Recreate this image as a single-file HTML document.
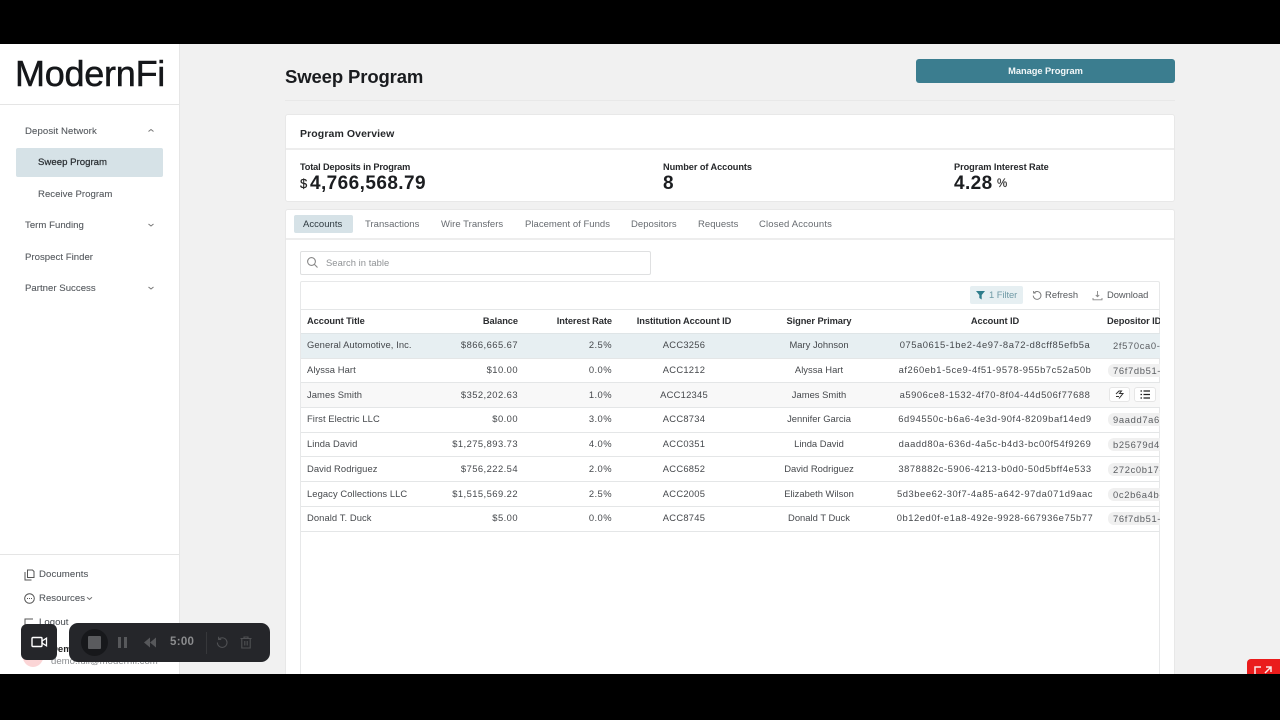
<!DOCTYPE html>
<html><head><meta charset="utf-8"><style>
html,body{margin:0;padding:0;width:1280px;height:720px;overflow:hidden;background:#000}
body{font-family:"Liberation Sans",sans-serif;position:relative;color:#1b1d20;filter:blur(.3px)}
div,span.a{position:absolute}
.t{position:absolute;white-space:nowrap;line-height:12px;height:12px}
.nav{font-size:9.6px;color:#55595e;letter-spacing:.02px;-webkit-text-stroke:.1px #55595e;margin-top:1px}
.tab{font-size:9.5px;color:#676b70;top:219px;letter-spacing:.03px}
.lbl{font-size:9.2px;font-weight:700;color:#26282b;top:161px;letter-spacing:-.06px}
.big{font-size:19px;font-weight:700;color:#1b1d20;top:174px;line-height:20px;height:20px;letter-spacing:.42px}
.th{font-size:9.3px;font-weight:700;color:#2b2d30;top:315px;letter-spacing:-.08px}
.c{font-size:9.4px;color:#45484c;letter-spacing:.25px}
.c.l{letter-spacing:.08px}
.c.r{letter-spacing:.45px}
.c.m[style*="left:709px"]{letter-spacing:.02px}
.c.m[style*="left:885px"]{letter-spacing:.55px}
.l{left:307px}.r{text-align:right;width:120px}.m{text-align:center;width:220px}
.hl{position:absolute;left:301px;width:859px;height:1px;background:#e4e6e7}
.chip{position:absolute;left:1108px;width:52px;height:13px;background:#f0f0f0;border-radius:6px 0 0 6px;overflow:hidden;font-size:9.4px;line-height:13px;color:#5a5d61;padding-left:5px;box-sizing:border-box;white-space:nowrap;letter-spacing:.65px}
</style></head><body>
<div style="left:0;top:44px;width:1280px;height:630px;background:#f1f1f1;overflow:hidden"></div>

<div style="left:0;top:44px;width:179px;height:630px;background:#fff;border-right:1px solid #e6e6e6"></div>
<div style="left:0;top:104px;width:179px;height:1px;background:#e5e5e5"></div>
<div style="left:0;top:554px;width:179px;height:1px;background:#e5e5e5"></div>
<div class="t" style="left:15px;top:54px;font-size:36px;line-height:40px;height:40px;color:#15171a;letter-spacing:-.25px;-webkit-text-stroke:.5px #15171a">ModernFi</div>

<div class="t nav" style="left:25px;top:125px;letter-spacing:.1px">Deposit Network</div>
<svg style="position:absolute;left:147px;top:128px" width="8" height="6"><path d="M1.5 3.5L4 1.5L6.5 3.5" fill="none" stroke="#777" stroke-width="1"/></svg>
<div style="left:16px;top:148px;width:147px;height:29px;background:#d6e2e7;border-radius:2px"></div>
<div class="t nav" style="left:38px;top:156px;color:#2c3135;-webkit-text-stroke:.25px #2c3135">Sweep Program</div>
<div class="t nav" style="left:38px;top:188px">Receive Program</div>
<div class="t nav" style="left:25px;top:219px">Term Funding</div>
<svg style="position:absolute;left:147px;top:222px" width="8" height="6"><path d="M1.5 2L4 4L6.5 2" fill="none" stroke="#777" stroke-width="1"/></svg>
<div class="t nav" style="left:25px;top:251px">Prospect Finder</div>
<div class="t nav" style="left:25px;top:282px">Partner Success</div>
<svg style="position:absolute;left:147px;top:285px" width="8" height="6"><path d="M1.5 2L4 4L6.5 2" fill="none" stroke="#777" stroke-width="1"/></svg>

<svg style="position:absolute;left:24px;top:569px" width="11" height="12"><path d="M3.5 1H8.5L10 2.5V8.5H3.5Z M1 3V11H7.5" fill="none" stroke="#555" stroke-width="1"/></svg>
<div class="t nav" style="left:39px;top:568px;letter-spacing:.1px">Documents</div>
<svg style="position:absolute;left:24px;top:593px" width="11" height="11"><circle cx="5.5" cy="5.5" r="4.8" fill="none" stroke="#555" stroke-width="1"/><path d="M3 5.5h1M5 5.5h1M7 5.5h1" stroke="#555"/></svg>
<div class="t nav" style="left:39px;top:592px">Resources</div>
<svg style="position:absolute;left:86px;top:596px" width="7" height="5"><path d="M1 1.2L3.5 3.4L6 1.2" fill="none" stroke="#777"/></svg>
<svg style="position:absolute;left:24px;top:618px" width="11" height="10"><path d="M9 1H1V9H9" fill="none" stroke="#555"/></svg>
<div class="t nav" style="left:39px;top:616px">Logout</div>
<div style="left:22px;top:641px;width:22px;height:26px;background:#fbd5d6;border-radius:50%"></div>
<div class="t" style="left:51px;top:644px;font-size:9.6px;font-weight:700;color:#222">Demo Full</div>
<div class="t" style="left:51px;top:656px;font-size:9.6px;color:#8a8d90;letter-spacing:0">demo.full@modernfi.com</div>

<div class="t" style="left:285px;top:66px;font-size:18.5px;line-height:22px;height:22px;font-weight:700;color:#1a1c1f;letter-spacing:-.12px">Sweep Program</div>
<div style="left:916px;top:59px;width:259px;height:24px;background:#3b7d8f;border-radius:3px"></div>
<div class="t" style="left:916px;top:65px;width:259px;text-align:center;font-size:9.3px;font-weight:700;color:#f2f7f8;letter-spacing:-.05px">Manage Program</div>
<div style="left:285px;top:100px;width:890px;height:1px;background:#e8e8e8"></div>

<div style="left:285px;top:114px;width:888px;height:86px;background:#fff;border:1px solid #e8e8e8;border-radius:3px"></div>
<div style="left:286px;top:148px;width:888px;height:2px;background:#ededed"></div>
<div class="t" style="left:300px;top:128px;font-size:10.5px;font-weight:700;color:#25272a;letter-spacing:.1px">Program Overview</div>
<div class="t lbl" style="left:300px;letter-spacing:-.14px">Total Deposits in Program</div>
<div class="t" style="left:300px;top:177px;font-size:13px;line-height:14px;height:14px;color:#222;font-weight:400;-webkit-text-stroke:.2px #222">$</div>
<div class="t big" style="left:310px">4,766,568.79</div>
<div class="t lbl" style="left:663px">Number of Accounts</div>
<div class="t big" style="left:663px">8</div>
<div class="t lbl" style="left:954px">Program Interest Rate</div>
<div class="t big" style="left:954px">4.28</div>
<div class="t" style="left:997px;top:178px;font-size:11.5px;line-height:13px;height:13px;color:#333;-webkit-text-stroke:.2px #333">%</div>

<div style="left:285px;top:209px;width:888px;height:465px;background:#fff;border:1px solid #e8e8e8;border-bottom:0;border-radius:3px 3px 0 0"></div>
<div style="left:286px;top:238px;width:888px;height:2px;background:#ededed"></div>
<div style="left:294px;top:215px;width:59px;height:18px;background:#d6e2e7;border-radius:2px"></div>
<div class="t tab" style="left:303px;color:#2f3a40">Accounts</div>
<div class="t tab" style="left:365px">Transactions</div>
<div class="t tab" style="left:441px">Wire Transfers</div>
<div class="t tab" style="left:525px">Placement of Funds</div>
<div class="t tab" style="left:631px">Depositors</div>
<div class="t tab" style="left:698px">Requests</div>
<div class="t tab" style="left:759px;letter-spacing:.15px">Closed Accounts</div>

<div style="left:300px;top:251px;width:349px;height:22px;background:#fff;border:1px solid #dfe0e1;border-radius:2px"></div>
<svg style="position:absolute;left:306px;top:256px" width="13" height="13"><circle cx="5.5" cy="5.5" r="3.9" fill="none" stroke="#888" stroke-width="1.1"/><path d="M8.4 8.4L11.5 11.5" stroke="#888" stroke-width="1.1"/></svg>
<div class="t" style="left:326px;top:257px;font-size:9.4px;color:#8f9295;letter-spacing:.05px">Search in table</div>

<div style="left:300px;top:281px;width:858px;height:393px;background:#fff;border:1px solid #e7e8e9;border-bottom:0;border-radius:2px 2px 0 0"></div>
<div class="hl" style="top:309px"></div>
<div style="left:970px;top:286px;width:53px;height:18px;background:#e6eff2;border-radius:2px"></div>
<svg style="position:absolute;left:975px;top:290px" width="11" height="10"><path d="M1 1H10L6.7 5V9.5L4.3 8V5Z" fill="#2f7d8c"/></svg>
<div class="t" style="left:989px;top:289px;font-size:9.4px;color:#6f9aa6;letter-spacing:-.05px">1 Filter</div>
<svg style="position:absolute;left:1032px;top:290px" width="10" height="11"><path d="M2.4 2.6A3.9 3.9 0 1 1 1.2 5.6M1.6 1V3H3.6" fill="none" stroke="#777" stroke-width=".9"/></svg>
<div class="t" style="left:1045px;top:289px;font-size:9.4px;color:#55585c;letter-spacing:.05px">Refresh</div>
<svg style="position:absolute;left:1092px;top:290px" width="11" height="11"><path d="M5.5 1V6.5M3.8 5L5.5 6.7L7.2 5M1 8V9.8H10V8" fill="none" stroke="#888" stroke-width=".9"/></svg>
<div class="t" style="left:1107px;top:289px;font-size:9.4px;color:#55585c;letter-spacing:-.05px">Download</div>

<div style="left:301px;top:334px;width:859px;height:24px;background:#e7eff2"></div>
<div style="left:301px;top:383px;width:859px;height:24px;background:#f8f8f8"></div>
<div class="hl" style="top:333px;background:#dfe5e7"></div><div class="hl" style="top:358px"></div><div class="hl" style="top:382px"></div><div class="hl" style="top:407px"></div><div class="hl" style="top:432px"></div><div class="hl" style="top:456px"></div><div class="hl" style="top:481px"></div><div class="hl" style="top:506px"></div><div class="hl" style="top:531px"></div>

<div class="t th l">Account Title</div>
<div class="t th r" style="left:398px">Balance</div>
<div class="t th r" style="left:492px">Interest Rate</div>
<div class="t th m" style="left:574px">Institution Account ID</div>
<div class="t th m" style="left:709px">Signer Primary</div>
<div class="t th m" style="left:885px;letter-spacing:-.08px">Account ID</div>
<div style="left:1107px;top:315px;width:53px;height:12px;overflow:hidden"><div class="t th" style="left:0;top:0">Depositor ID</div></div>

<!-- rows -->
<div class="t c l" style="top:339px">General Automotive, Inc.</div><div class="t c r" style="left:398px;top:339px">$866,665.67</div><div class="t c r" style="left:492px;top:339px">2.5%</div><div class="t c m" style="left:574px;top:339px">ACC3256</div><div class="t c m" style="left:709px;top:339px">Mary Johnson</div><div class="t c m" style="left:885px;top:339px">075a0615-1be2-4e97-8a72-d8cff85efb5a</div><div class="chip" style="top:339px;background:none">2f570ca0-1b</div>
<div class="t c l" style="top:364px">Alyssa Hart</div><div class="t c r" style="left:398px;top:364px">$10.00</div><div class="t c r" style="left:492px;top:364px">0.0%</div><div class="t c m" style="left:574px;top:364px">ACC1212</div><div class="t c m" style="left:709px;top:364px">Alyssa Hart</div><div class="t c m" style="left:885px;top:364px">af260eb1-5ce9-4f51-9578-955b7c52a50b</div><div class="chip" style="top:364px">76f7db51-4c</div>
<div class="t c l" style="top:389px">James Smith</div><div class="t c r" style="left:398px;top:389px">$352,202.63</div><div class="t c r" style="left:492px;top:389px">1.0%</div><div class="t c m" style="left:574px;top:389px">ACC12345</div><div class="t c m" style="left:709px;top:389px">James Smith</div><div class="t c m" style="left:885px;top:389px">a5906ce8-1532-4f70-8f04-44d506f77688</div>
<div style="left:1109px;top:387px;width:21px;height:15px;background:#fff;border:1px solid #e6e6e6;border-radius:3px;box-sizing:border-box"></div>
<svg style="position:absolute;left:1114px;top:389px" width="11" height="11"><path d="M2 5L5 2H7.5L5.5 4.5H9L5 9.5M2 7.5H5" fill="none" stroke="#333" stroke-width="1"/></svg>
<div style="left:1134px;top:387px;width:22px;height:15px;background:#fff;border:1px solid #e6e6e6;border-radius:3px;box-sizing:border-box"></div>
<svg style="position:absolute;left:1140px;top:390px" width="11" height="9"><path d="M0.5 1H2M3.5 1H10M0.5 4.5H2M3.5 4.5H10M0.5 8H2M3.5 8H10" stroke="#222" stroke-width="1.2"/></svg>
<div class="t c l" style="top:413px">First Electric LLC</div><div class="t c r" style="left:398px;top:413px">$0.00</div><div class="t c r" style="left:492px;top:413px">3.0%</div><div class="t c m" style="left:574px;top:413px">ACC8734</div><div class="t c m" style="left:709px;top:413px">Jennifer Garcia</div><div class="t c m" style="left:885px;top:413px">6d94550c-b6a6-4e3d-90f4-8209baf14ed9</div><div class="chip" style="top:413px">9aadd7a6-3c</div>
<div class="t c l" style="top:438px">Linda David</div><div class="t c r" style="left:398px;top:438px">$1,275,893.73</div><div class="t c r" style="left:492px;top:438px">4.0%</div><div class="t c m" style="left:574px;top:438px">ACC0351</div><div class="t c m" style="left:709px;top:438px">Linda David</div><div class="t c m" style="left:885px;top:438px">daadd80a-636d-4a5c-b4d3-bc00f54f9269</div><div class="chip" style="top:438px">b25679d4-1a</div>
<div class="t c l" style="top:463px">David Rodriguez</div><div class="t c r" style="left:398px;top:463px">$756,222.54</div><div class="t c r" style="left:492px;top:463px">2.0%</div><div class="t c m" style="left:574px;top:463px">ACC6852</div><div class="t c m" style="left:709px;top:463px">David Rodriguez</div><div class="t c m" style="left:885px;top:463px">3878882c-5906-4213-b0d0-50d5bff4e533</div><div class="chip" style="top:463px">272c0b17-8e</div>
<div class="t c l" style="top:488px">Legacy Collections LLC</div><div class="t c r" style="left:398px;top:488px">$1,515,569.22</div><div class="t c r" style="left:492px;top:488px">2.5%</div><div class="t c m" style="left:574px;top:488px">ACC2005</div><div class="t c m" style="left:709px;top:488px">Elizabeth Wilson</div><div class="t c m" style="left:885px;top:488px">5d3bee62-30f7-4a85-a642-97da071d9aac</div><div class="chip" style="top:488px">0c2b6a4b-7f</div>
<div class="t c l" style="top:512px">Donald T. Duck</div><div class="t c r" style="left:398px;top:512px">$5.00</div><div class="t c r" style="left:492px;top:512px">0.0%</div><div class="t c m" style="left:574px;top:512px">ACC8745</div><div class="t c m" style="left:709px;top:512px">Donald T Duck</div><div class="t c m" style="left:885px;top:512px">0b12ed0f-e1a8-492e-9928-667936e75b77</div><div class="chip" style="top:512px">76f7db51-4c</div>

<!-- recorder -->
<div style="left:21px;top:624px;width:36px;height:36px;background:#25262a;border-radius:6px"></div>
<svg style="position:absolute;left:31px;top:636px" width="17" height="12"><rect x="1" y="1.5" width="10" height="9" rx="1" fill="none" stroke="#fff" stroke-width="1.4"/><path d="M11 5L15.5 2.2V9.8L11 7Z" fill="none" stroke="#fff" stroke-width="1.3"/></svg>
<div style="left:69px;top:623px;width:201px;height:39px;background:#25262a;border-radius:9px"></div>
<div style="left:81px;top:629px;width:27px;height:27px;background:#17181b;border-radius:50%"></div>
<div style="left:88px;top:636px;width:13px;height:13px;background:#5a5b5e;border-radius:1px"></div>
<div style="left:118px;top:637px;width:3px;height:11px;background:#57585b"></div>
<div style="left:124px;top:637px;width:3px;height:11px;background:#57585b"></div>
<svg style="position:absolute;left:143px;top:637px" width="14" height="11"><path d="M7 0.5V10.5L1 5.5Z M13 0.5V10.5L7 5.5Z" fill="#57585b"/></svg>
<div class="t" style="left:170px;top:636px;font-size:11.5px;font-weight:700;color:#8b8c8e;letter-spacing:.3px">5:00</div>
<div style="left:206px;top:632px;width:1px;height:22px;background:#37383b"></div>
<svg style="position:absolute;left:216px;top:636px" width="13" height="13"><path d="M3 3A4.8 4.8 0 1 1 1.4 6.5M2.6 0.8V3.4H5.2" fill="none" stroke="#4f5053" stroke-width="1.1"/></svg>
<svg style="position:absolute;left:240px;top:636px" width="12" height="13"><path d="M0.5 2.5H11.5M4 2.5V1H8V2.5M1.8 2.5V12H10.2V2.5M4.8 5V9.5M7.2 5V9.5" fill="none" stroke="#4f5053" stroke-width="1.1"/></svg>

<div style="left:1247px;top:659px;width:33px;height:15px;background:#ea1c1c;border-radius:4px 0 0 0"></div>
<svg style="position:absolute;left:1254px;top:665px" width="20" height="9"><path d="M1 9V2H7M12 2H17V7M17 2L11 8" fill="none" stroke="#fbe6e6" stroke-width="1.5"/></svg>

<div style="left:0;top:0;width:1280px;height:44px;background:#000"></div>
<div style="left:0;top:674px;width:1280px;height:46px;background:#000"></div>
</body></html>
